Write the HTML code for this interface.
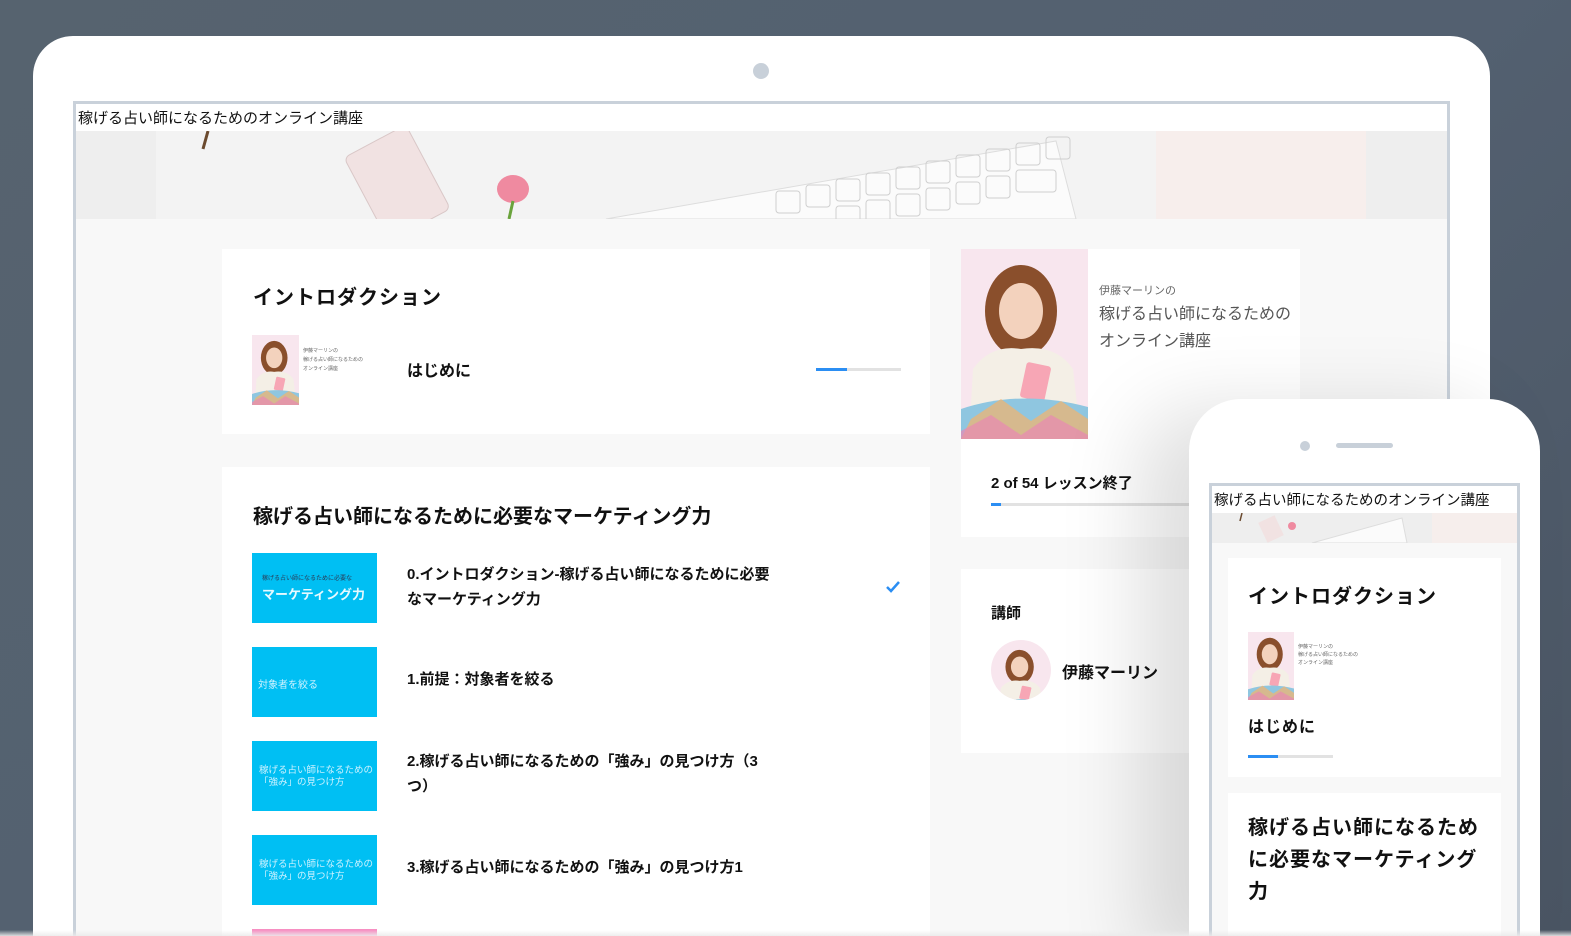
<!DOCTYPE html>
<html><head><meta charset="utf-8">
<style>
*{margin:0;padding:0;box-sizing:border-box}
html,body{width:1571px;height:936px;overflow:hidden}
body{position:relative;background:linear-gradient(135deg,#56636f 0%,#536070 60%,#4a5563 100%);font-family:"Liberation Sans","Noto Sans CJK JP",sans-serif;color:#111}
#wrap{position:absolute;left:0;top:0;width:1571px;height:936px;overflow:hidden}
.a{position:absolute}
.b{font-weight:bold}
.bar{position:absolute;height:3px;background:#e2e2e2}
.bar i{position:absolute;left:0;top:0;height:3px;background:#2b8ef3}
.cy{position:absolute;width:125px;height:70px;background:#00bff3;color:#cdf2ff;white-space:nowrap}
</style></head><body><div id="wrap">
<svg width="0" height="0" style="position:absolute">
<defs>
<symbol id="ph" viewBox="0 0 127 190" preserveAspectRatio="none">
<rect width="127" height="190" fill="#f8e6ee"/>
<ellipse cx="60" cy="62" rx="36" ry="46" fill="#8a4f2c"/>
<ellipse cx="60" cy="62" rx="22" ry="28" fill="#f3d2bd"/>
<path d="M8 190 L12 120 Q30 95 60 100 Q95 95 112 120 L120 190Z" fill="#f4efe6"/>
<rect x="62" y="115" width="25" height="36" rx="3" fill="#f7a6b5" transform="rotate(12 75 133)"/>
<path d="M0 160 Q60 140 127 158 L127 190 L0 190Z" fill="#8fc6e0"/>
<path d="M10 170 L40 150 L70 172 L100 152 L127 170 L127 190 L0 190Z" fill="#f4b36b" opacity=".7"/>
<path d="M0 182 L30 166 L60 186 L90 166 L127 186 L127 190 L0 190Z" fill="#e889b4" opacity=".7"/>
</symbol>
</defs></svg>

<!-- tablet frame -->
<div class="a" style="left:33px;top:36px;width:1457px;height:940px;background:#fff;border-radius:40px"></div>
<div class="a" style="left:753px;top:63px;width:16px;height:16px;border-radius:50%;background:#c8d0d9"></div>
<div class="a" style="left:73px;top:101px;width:1377px;height:860px;border:3px solid #c9d1da;background:#f8f8f8;overflow:hidden">
  <div class="a" style="left:0;top:0;width:1371px;height:27px;background:#fff;font-size:15px;line-height:30px;padding-left:2px;color:#111">稼げる占い師になるためのオンライン講座</div>
  <div class="a" style="left:0;top:27px;width:1371px;height:88px;background:#eeeeee;overflow:hidden">
    <div class="a" style="left:80px;top:0;width:1210px;height:88px;background:#f3f3f3"></div>
    <div class="a" style="left:1080px;top:0;width:210px;height:88px;background:#f7eeec"></div>
    <svg class="a" style="left:0;top:0" width="1371" height="88">
      <path d="M132 0 L127 18" stroke="#6b4a2e" stroke-width="3"/>
      <rect x="285" y="5" width="70" height="95" rx="6" fill="#f1e2e2" stroke="#d9c7c7" transform="rotate(-28 320 50)"/>
      <ellipse cx="437" cy="58" rx="16" ry="14" fill="#ef8aa0"/>
      <path d="M437 70 L433 88" stroke="#6aa33c" stroke-width="3"/>
      <path d="M530 88 L980 10 L1000 88Z" fill="#fbfbfb" stroke="#ddd"/>
      <g fill="none" stroke="#cfcfcf">
        <rect x="700" y="60" width="24" height="22" rx="3"/><rect x="730" y="54" width="24" height="22" rx="3"/><rect x="760" y="48" width="24" height="22" rx="3"/><rect x="790" y="42" width="24" height="22" rx="3"/><rect x="820" y="36" width="24" height="22" rx="3"/><rect x="850" y="30" width="24" height="22" rx="3"/><rect x="880" y="24" width="24" height="22" rx="3"/><rect x="910" y="18" width="24" height="22" rx="3"/><rect x="940" y="12" width="24" height="22" rx="3"/><rect x="970" y="6" width="24" height="22" rx="3"/>
        <rect x="760" y="75" width="24" height="22" rx="3"/><rect x="790" y="69" width="24" height="22" rx="3"/><rect x="820" y="63" width="24" height="22" rx="3"/><rect x="850" y="57" width="24" height="22" rx="3"/><rect x="880" y="51" width="24" height="22" rx="3"/><rect x="910" y="45" width="24" height="22" rx="3"/><rect x="940" y="39" width="40" height="22" rx="3"/>
      </g>
    </svg>
  </div>
</div>

<!-- card 1 -->
<div class="a" style="left:222px;top:249px;width:708px;height:185px;background:#fff"></div>
<div class="a b" style="left:253px;top:281px;font-size:20px;letter-spacing:1px">イントロダクション</div>
<div class="a" style="left:252px;top:335px;width:125px;height:70px;background:#fff">
  <svg class="a" style="left:0;top:0" width="47" height="70"><use href="#ph" width="47" height="70"/></svg>
  <div class="a" style="left:51px;top:12px;font-size:5px;color:#666;line-height:9px;white-space:nowrap">伊藤マーリンの<br>稼げる占い師になるための<br>オンライン講座</div>
</div>
<div class="a b" style="left:407px;top:357px;font-size:16px">はじめに</div>
<div class="bar" style="left:816px;top:368px;width:85px"><i style="width:31px"></i></div>

<!-- card 2 -->
<div class="a" style="left:222px;top:467px;width:708px;height:480px;background:#fff"></div>
<div class="a b" style="left:253px;top:500px;font-size:20px">稼げる占い師になるために必要なマーケティング力</div>

<div class="cy" style="left:252px;top:553px"><div class="a" style="left:10px;top:20px;font-size:6px;color:#2a3a55">稼げる占い師になるために必要な</div><div class="a b" style="left:10px;top:31px;font-size:13px;color:#e6f9ff">マーケティング力</div></div>
<div class="a b" style="left:407px;top:562px;font-size:15px;line-height:25px;white-space:nowrap">0.イントロダクション-稼げる占い師になるために必要<br>なマーケティング力</div>
<svg class="a" style="left:885px;top:580px" width="16" height="14"><path d="M2 7 L6 11 L14 2" fill="none" stroke="#2b8ef3" stroke-width="2.5"/></svg>

<div class="cy" style="left:252px;top:647px"><div class="a" style="left:6px;top:29px;font-size:10px">対象者を絞る</div></div>
<div class="a b" style="left:407px;top:668px;font-size:15px">1.前提：対象者を絞る</div>

<div class="cy" style="left:252px;top:741px"><div class="a" style="left:7px;top:24px;font-size:9.5px;line-height:12px">稼げる占い師になるための<br>「強み」の見つけ方</div></div>
<div class="a b" style="left:407px;top:749px;font-size:15px;line-height:25px;white-space:nowrap">2.稼げる占い師になるための「強み」の見つけ方（3<br>つ）</div>

<div class="cy" style="left:252px;top:835px"><div class="a" style="left:7px;top:24px;font-size:9.5px;line-height:12px">稼げる占い師になるための<br>「強み」の見つけ方</div></div>
<div class="a b" style="left:407px;top:856px;font-size:15px">3.稼げる占い師になるための「強み」の見つけ方1</div>

<div class="a" style="left:252px;top:929px;width:125px;height:10px;background:#f78fc2"></div>

<!-- sidebar -->
<div class="a" style="left:961px;top:249px;width:339px;height:288px;background:#fff"></div>
<svg class="a" style="left:961px;top:249px" width="127" height="190"><use href="#ph" width="127" height="190"/></svg>
<div class="a" style="left:1099px;top:282px;font-size:11px;color:#666">伊藤マーリンの</div>
<div class="a" style="left:1099px;top:301px;font-size:16px;color:#555;line-height:27px">稼げる占い師になるための<br>オンライン講座</div>
<div class="a b" style="left:991px;top:472px;font-size:15px">2 of 54 レッスン終了</div>
<div class="bar" style="left:991px;top:503px;width:290px"><i style="width:10px"></i></div>

<div class="a" style="left:961px;top:569px;width:339px;height:184px;background:#fff"></div>
<div class="a b" style="left:991px;top:602px;font-size:15px">講師</div>
<div class="a" style="left:991px;top:640px;width:60px;height:60px;border-radius:50%;overflow:hidden;background:#f8e6ee"><svg width="60" height="60"><use href="#ph" x="5" y="4" width="50" height="70"/></svg></div>
<div class="a b" style="left:1062px;top:659px;font-size:16px">伊藤マーリン</div>

<!-- phone -->
<div class="a" style="left:1189px;top:399px;width:351px;height:560px;background:#fff;border-radius:52px 52px 0 0;box-shadow:-50px 10px 80px rgba(0,0,0,.13)"></div>
<div class="a" style="left:1300px;top:441px;width:10px;height:10px;border-radius:50%;background:#c8d0d9"></div>
<div class="a" style="left:1336px;top:443px;width:57px;height:5px;border-radius:3px;background:#c8d0d9"></div>
<div class="a" style="left:1209px;top:483px;width:311px;height:470px;border:3px solid #c9d1da;border-bottom:none;background:#f8f8f8;overflow:hidden">
  <div class="a" style="left:0;top:0;width:305px;height:27px;background:#fff;font-size:14.5px;line-height:30px;padding-left:2px;white-space:nowrap">稼げる占い師になるためのオンライン講座</div>
  <div class="a" style="left:0;top:27px;width:305px;height:30px;background:#eee">
    <svg width="305" height="30"><path d="M30 0 L28 8" stroke="#6b4a2e" stroke-width="1.5"/><rect x="50" y="5" width="18" height="22" fill="#f1e2e2" transform="rotate(-25 59 16)"/><circle cx="80" cy="13" r="4" fill="#ef8aa0"/><path d="M100 30 L190 5 L195 30Z" fill="#fbfbfb" stroke="#ddd"/><rect x="220" y="0" width="85" height="30" fill="#f6eeec"/></svg>
  </div>
</div>
<div class="a" style="left:1228px;top:558px;width:273px;height:219px;background:#fff"></div>
<div class="a b" style="left:1248px;top:580px;font-size:20px;letter-spacing:1px">イントロダクション</div>
<svg class="a" style="left:1248px;top:632px" width="46" height="68"><use href="#ph" width="46" height="68"/></svg>
<div class="a" style="left:1298px;top:643px;font-size:5px;color:#666;line-height:8px;white-space:nowrap">伊藤マーリンの<br>稼げる占い師になるための<br>オンライン講座</div>
<div class="a b" style="left:1248px;top:713px;font-size:16px;letter-spacing:1px">はじめに</div>
<div class="bar" style="left:1248px;top:755px;width:85px"><i style="width:30px"></i></div>
<div class="a" style="left:1228px;top:793px;width:273px;height:160px;background:#fff"></div>
<div class="a b" style="left:1248px;top:812px;font-size:20px;line-height:32px;width:235px;letter-spacing:1px">稼げる占い師になるために必要なマーケティング力</div>

<div class="a" style="left:0;top:930px;width:1571px;height:6px;background:linear-gradient(rgba(240,240,240,0),rgba(235,235,235,.9))"></div>
</div></body></html>
